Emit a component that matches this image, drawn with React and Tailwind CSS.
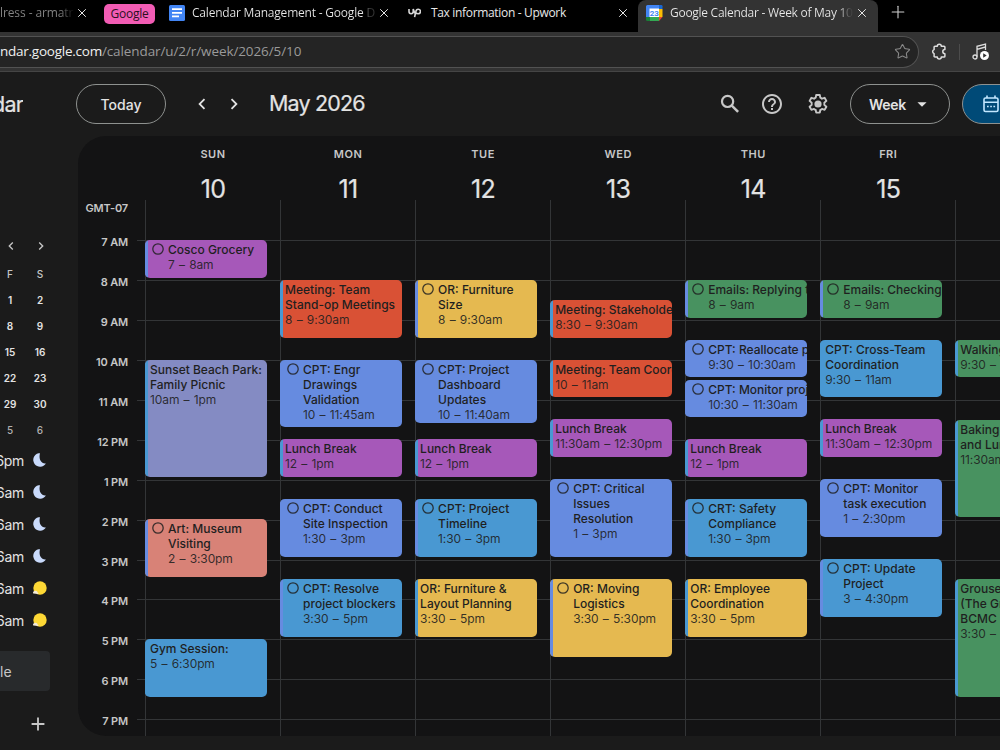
import React from "react";
import { X, Plus, Star } from "lucide-react";
import {
  MdChevronLeft,
  MdChevronRight,
  MdHelpOutline,
  MdArrowDropDown,
  MdAdd,
} from "react-icons/md";

const HOUR = 39.95;
const START = 6;

const bgColors = {
  grape: "bg-[#a658b9]",
  tomato: "bg-[#d95135]",
  lavender: "bg-[#848bc3]",
  flamingo: "bg-[#d88277]",
  peacock: "bg-[#4998d2]",
  cobalt: "bg-[#668be0]",
  banana: "bg-[#e5b950]",
  basil: "bg-[#489260]",
};

// start / end are decimal hours, task = has the round checkbox
const days = [
  {
    name: "SUN",
    date: 10,
    events: [
      { start: 7, end: 8, color: "grape", task: true, title: ["Cosco Grocery"], time: "7 – 8am" },
      { start: 10, end: 13, color: "lavender", title: ["Sunset Beach Park:", "Family Picnic"], time: "10am – 1pm" },
      { start: 14, end: 15.5, color: "flamingo", task: true, title: ["Art: Museum", "Visiting"], time: "2 – 3:30pm" },
      { start: 17, end: 18.5, color: "peacock", title: ["Gym Session:"], time: "5 – 6:30pm" },
    ],
  },
  {
    name: "MON",
    date: 11,
    events: [
      { start: 8, end: 9.5, color: "tomato", title: ["Meeting: Team", "Stand-op Meetings"], time: "8 – 9:30am" },
      { start: 10, end: 11.75, color: "cobalt", task: true, title: ["CPT: Engr", "Drawings", "Validation"], time: "10 – 11:45am" },
      { start: 12, end: 13, color: "grape", title: ["Lunch Break"], time: "12 – 1pm" },
      { start: 13.5, end: 15, color: "cobalt", task: true, title: ["CPT: Conduct", "Site Inspection"], time: "1:30 – 3pm" },
      { start: 15.5, end: 17, color: "peacock", task: true, title: ["CPT: Resolve", "project blockers"], time: "3:30 – 5pm" },
    ],
  },
  {
    name: "TUE",
    date: 12,
    events: [
      { start: 8, end: 9.5, color: "banana", task: true, title: ["OR: Furniture", "Size"], time: "8 – 9:30am" },
      { start: 10, end: 11.65, color: "cobalt", task: true, title: ["CPT: Project", "Dashboard", "Updates"], time: "10 – 11:40am" },
      { start: 12, end: 13, color: "grape", title: ["Lunch Break"], time: "12 – 1pm" },
      { start: 13.5, end: 15, color: "peacock", task: true, title: ["CPT: Project", "Timeline"], time: "1:30 – 3pm" },
      { start: 15.5, end: 17, color: "banana", title: ["OR: Furniture &", "Layout Planning"], time: "3:30 – 5pm" },
    ],
  },
  {
    name: "WED",
    date: 13,
    events: [
      { start: 8.5, end: 9.5, color: "tomato", title: ["Meeting: Stakeholders"], time: "8:30 – 9:30am" },
      { start: 10, end: 11, color: "tomato", title: ["Meeting: Team Coord"], time: "10 – 11am" },
      { start: 11.5, end: 12.5, color: "grape", title: ["Lunch Break"], time: "11:30am – 12:30pm" },
      { start: 13, end: 15, color: "cobalt", task: true, title: ["CPT: Critical", "Issues", "Resolution"], time: "1 – 3pm" },
      { start: 15.5, end: 17.5, color: "banana", task: true, title: ["OR: Moving", "Logistics"], time: "3:30 – 5:30pm" },
    ],
  },
  {
    name: "THU",
    date: 14,
    events: [
      { start: 8, end: 9, color: "basil", task: true, title: ["Emails: Replying t"], time: "8 – 9am" },
      { start: 9.5, end: 10.5, color: "cobalt", task: true, title: ["CPT: Reallocate p"], time: "9:30 – 10:30am" },
      { start: 10.5, end: 11.5, color: "cobalt", task: true, title: ["CPT: Monitor proj"], time: "10:30 – 11:30am" },
      { start: 12, end: 13, color: "grape", title: ["Lunch Break"], time: "12 – 1pm" },
      { start: 13.5, end: 15, color: "peacock", task: true, title: ["CRT: Safety", "Compliance"], time: "1:30 – 3pm" },
      { start: 15.5, end: 17, color: "banana", title: ["OR: Employee", "Coordination"], time: "3:30 – 5pm" },
    ],
  },
  {
    name: "FRI",
    date: 15,
    events: [
      { start: 8, end: 9, color: "basil", task: true, title: ["Emails: Checking"], time: "8 – 9am" },
      { start: 9.5, end: 11, color: "peacock", title: ["CPT: Cross-Team", "Coordination"], time: "9:30 – 11am" },
      { start: 11.5, end: 12.5, color: "grape", title: ["Lunch Break"], time: "11:30am – 12:30pm" },
      { start: 13, end: 14.5, color: "cobalt", task: true, title: ["CPT: Monitor", "task execution"], time: "1 – 2:30pm" },
      { start: 15, end: 16.5, color: "peacock", task: true, title: ["CPT: Update", "Project"], time: "3 – 4:30pm" },
    ],
  },
  {
    name: "",
    date: "",
    events: [
      { start: 9.5, end: 10.5, color: "basil", title: ["Walking"], time: "9:30 – 10:30am" },
      { start: 11.5, end: 14, color: "basil", title: ["Baking", "and Lunch"], time: "11:30am – 2pm" },
      { start: 15.5, end: 18.5, color: "basil", title: ["Grouse", "(The Grind)", "BCMC"], time: "3:30 – 6:30pm" },
    ],
  },
];

const hours = ["7 AM", "8 AM", "9 AM", "10 AM", "11 AM", "12 PM", "1 PM", "2 PM", "3 PM", "4 PM", "5 PM", "6 PM", "7 PM"];

const miniDates = [[1, 2], [8, 9], [15, 16], [22, 23], [29, 30], [5, 6]];

const clocks = [
  { label: "6pm", night: true },
  { label: "6am", night: true },
  { label: "6am", night: true },
  { label: "6am", night: true },
  { label: "6am", night: false },
  { label: "6am", night: false },
];

const DocsIcon = () => (
  <svg width="16" height="16" viewBox="0 0 16 16">
    <rect width="16" height="16" rx="1.5" fill="#4285f4" />
    <path d="M3 4.2h10M3 7.8h10M3 11.4h7" stroke="#fff" strokeWidth="1.7" />
  </svg>
);

const UpworkIcon = () => (
  <svg width="13" height="10" viewBox="0 0 13 10" fill="none" stroke="#d6d6d6" strokeWidth="1.6">
    <path d="M1 1v2.6a2.1 2.1 0 0 0 4.2 0V1c.5 2.2 1.6 4.2 3 4.9" />
    <path d="M6.6 9.2 7.7 4c.3-1.7 1.2-2.7 2.5-2.7a2.2 2.2 0 0 1 0 4.5c-1 0-1.9-.4-2.6-1.2" />
  </svg>
);

const CalendarIcon = () => (
  <svg width="17" height="16" viewBox="0 0 17 16">
    <path d="M1.5 0H13v4H4v8H0V1.5A1.5 1.5 0 0 1 1.5 0Z" fill="#4285f4" />
    <path d="M13 0h2.2A1.3 1.3 0 0 1 16.5 1.3V4H13Z" fill="#1967d2" />
    <path d="M13 4h3.5v8H13Z" fill="#fbbc04" />
    <path d="M4 12h9v4H4Z" fill="#34a853" />
    <path d="M0 12h4v4H1.5A1.5 1.5 0 0 1 0 14.5Z" fill="#188038" />
    <path d="M13 12h3.5L13 16Z" fill="#ea4335" />
    <path d="M3.5 3.5H13V12H3.5Z" fill="#fff" />
    <text x="8.3" y="10.8" textAnchor="middle" fontSize="8" fontWeight="700" fill="#4285f4" fontFamily="Roboto, sans-serif">23</text>
  </svg>
);

const PuzzleIcon = () => (
  <svg width="16" height="17" viewBox="0 0 16 17" fill="none" stroke="#dedede" strokeWidth="1.5" strokeLinejoin="round">
    <path d="M4 3.2h2.3a2 2 0 0 1 4 0H13a.9.9 0 0 1 .9.9v2.4a2.1 2.1 0 0 0 0 4.2v2.5a.9.9 0 0 1-.9.9h-2.7a2 2 0 0 1-4 0H4a.9.9 0 0 1-.9-.9v-2.6a2.1 2.1 0 0 1 0-4V4.1A.9.9 0 0 1 4 3.2Z" />
  </svg>
);

const MusicIcon = () => (
  <svg width="18" height="18" viewBox="0 0 18 18" fill="none" stroke="#dedede" strokeWidth="1.3">
    <path d="M5 13.8V3.3L13.5 1v6M5 6.3 13.5 4" />
    <circle cx="3" cy="14" r="2" />
    <circle cx="12.5" cy="12.5" r="4.5" fill="#fff" stroke="none" />
    <path d="M11.2 10.3v4.4l3.5-2.2Z" fill="#333" stroke="none" />
  </svg>
);

const SearchIcon = () => (
  <svg width="24" height="24" viewBox="0 0 24 24" className="-ml-px shrink-0 text-[#c7c7c7]" fill="none" stroke="currentColor">
    <circle cx="9.6" cy="9.4" r="5.6" strokeWidth="2.2" />
    <path d="m13.8 13.6 6.3 6.3" strokeWidth="2.5" />
  </svg>
);

const GearIcon = () => (
  <svg width="24" height="24" viewBox="0 0 24 24" className="ml-[22px] shrink-0 text-[#c7c7c7]" fill="none" stroke="currentColor" strokeWidth="1.9" strokeLinejoin="round">
    <path d="M10.2 3h3.6l.5 2.7a6.8 6.8 0 0 1 1.7 1l2.600-.9 1.800 3.100-2.100 1.800a6.800 6.800 0 0 1 0 2.200l2.100 1.800-1.800 3.100-2.600-.9a6.800 6.800 0 0 1-1.700 1l-.5 2.700h-3.600l-.5-2.700a6.800 6.800 0 0 1-1.700-1l-2.600.9-1.800-3.100 2.100-1.800a6.800 6.800 0 0 1 0-2.200L3.600 8.900l1.800-3.100 2.600.9a6.800 6.800 0 0 1 1.700-1Z" />
    <circle cx="12" cy="12" r="3.6" fill="currentColor" stroke="none" />
  </svg>
);

const ScheduleIcon = () => (
  <svg width="18" height="20" viewBox="0 0 18 20" fill="none" stroke="currentColor" strokeWidth="1.6">
    <rect x="2" y="4" width="14" height="13.5" rx="1.5" />
    <path d="M2 8.2h14M5 1.5V4M13 1.5V4" />
    <path d="M5 12.5h1.7M8.2 12.5h1.7M11.4 12.5h1.7" />
  </svg>
);

const Moon = () => (
  <svg width="14" height="14" viewBox="0 0 14 14">
    <path d="M5.5.3A6.8 6.8 0 1 0 12.900 10.400C9 11.200 5.200 7 7 .3Z" fill="#c9dafb" />
  </svg>
);

const Sun = () => (
  <svg width="14" height="14" viewBox="0 0 14 14">
    <circle cx="7" cy="7" r="6.7" fill="#fdd835" />
    <path d="M.4 12.6a1.600 1.600 0 0 1 1.200-2.600 2 2 0 0 1 3 1.400 1.200 1.200 0 0 1 .6 1.700Z" fill="#f3ead8" />
  </svg>
);

const TabBar = () => (
  <div className="flex h-8 bg-black font-['Open_Sans',sans-serif] text-[12px] text-[#e8e8e8]">
    <div className="flex w-[98px] shrink-0 items-center pb-[7px]">
      <span className="w-[74px] overflow-hidden whitespace-nowrap bg-gradient-to-r from-[#858585] from-82% to-[#111] to-98% bg-clip-text text-[12px] tracking-[-0.1px] text-transparent">
        lress - armatr
      </span>
      <X size={14} className="ml-px" strokeWidth={1.7} />
    </div>
    <div className="flex w-[71px] shrink-0 pl-[6px] pt-1">
      <span className="flex h-5 w-[51px] items-center justify-center rounded-[5px] bg-[#f25cb4] tracking-[-0.2px] text-[#2b1022]">
        Google
      </span>
    </div>
    <div className="flex w-[239px] shrink-0 items-center pb-[7px]">
      <DocsIcon />
      <span className="ml-[7px] w-[185px] overflow-hidden whitespace-nowrap bg-gradient-to-r from-[#e8e8e8] from-92% to-[#333] to-96% bg-clip-text font-medium tracking-[-0.2px] text-transparent">
        Calendar Management - Google D
      </span>
      <X size={14} strokeWidth={1.7} />
    </div>
    <div className="flex w-[230px] shrink-0 items-center pb-[7px]">
      <UpworkIcon />
      <span className="ml-[10px] w-[185px] whitespace-nowrap font-medium tracking-[-0.33px]">Tax information - Upwork</span>
      <X size={14} strokeWidth={1.7} />
    </div>
    <div className="flex w-[240px] shrink-0 items-center rounded-t-lg bg-[#333] pb-[7px] pl-2">
      <CalendarIcon />
      <span className="ml-[7px] w-[184px] overflow-hidden whitespace-nowrap bg-gradient-to-r from-[#e8e8e8] from-92% to-[#444] to-98% bg-clip-text font-medium tracking-[-0.28px] text-transparent">
        Google Calendar - Week of May 10
      </span>
      <X size={14} className="ml-px" strokeWidth={1.7} />
    </div>
    <Plus size={20} className="ml-[10px] mt-[2px] shrink-0 text-[#d0d0d0]" strokeWidth={1.3} />
  </div>
);

const AddressBar = () => (
  <div className="flex h-10 items-center border-b border-[#454545] bg-[#333]">
    <div className="flex h-8 w-[919px] shrink-0 items-center rounded-r-full border border-l-0 border-[#525252] bg-[#242424] font-['Open_Sans',sans-serif] text-[13.5px]">
      <span className="tracking-[-0.25px] text-[#f0f0f0]">ndar.google.com</span>
      <span className="tracking-[-0.1px] text-[#9a9a9a]">/calendar/u/2/r/week/2026/5/10</span>
      <Star size={17} className="ml-auto mr-[7px] text-[#8a8a8a]" strokeWidth={1.5} />
    </div>
    <div className="flex shrink-0 items-center">
      <div className="ml-3"><PuzzleIcon /></div>
      <div className="ml-3 h-4 w-px bg-[#4c4c4c]" />
      <div className="ml-3"><MusicIcon /></div>
    </div>
  </div>
);

const Header = () => (
  <header className="flex h-16 items-center text-[#e3e3e3]">
    <div className="flex w-[23px] shrink-0 justify-end overflow-hidden whitespace-nowrap text-[21.5px] tracking-[-0.8px] [-webkit-text-stroke:0.2px_#e3e3e3]">
      dar
    </div>
    <button className="ml-[53px] h-10 w-[90px] shrink-0 rounded-full border border-[#8e918f] text-[14px] font-medium">
      Today
    </button>
    <MdChevronLeft size={22} className="ml-[25px] shrink-0" />
    <MdChevronRight size={22} className="ml-[10px] shrink-0" />
    <h1 className="ml-[24px] w-[450px] shrink-0 pb-[2px] text-[21.5px] tracking-[-0.85px] [-webkit-text-stroke:0.2px_#e3e3e3]">May 2026</h1>
    <SearchIcon />
    <MdHelpOutline size={24} className="ml-[18px] shrink-0 text-[#c7c7c7]" />
    <GearIcon />
    <button className="ml-5 flex h-10 w-[100px] shrink-0 items-center rounded-full border border-[#8e918f] pl-[18px] text-[14px] font-semibold tracking-[-0.3px]">
      Week
      <MdArrowDropDown size={22} className="ml-[5px]" />
    </button>
    <button className="ml-3 flex h-10 w-[100px] shrink-0 items-center rounded-full border border-[#8e918f] bg-[#004a77] pl-[19px] text-[#c2e7ff]">
      <ScheduleIcon />
    </button>
  </header>
);

const Sidebar = () => (
  <aside className="w-[78px] shrink-0 overflow-hidden text-[#e3e3e3]">
    <div className="mt-[102px] flex h-4 items-center pl-[3px] text-[#c7c7c7]">
      <MdChevronLeft size={16} />
      <MdChevronRight size={16} className="ml-[14px]" />
    </div>
    <div className="mt-[7px] text-[10px] font-medium">
      <div className="flex h-[26px] items-center pt-px text-[#c7c7c7]">
        <span className="w-5 text-center">F</span>
        <span className="ml-[10px] w-5 text-center">S</span>
      </div>
      {miniDates.map(([f, s]) => (
        <div key={f + "-" + s} className="flex h-[26px] items-center">
          <span className={f === 5 ? "w-5 text-center text-[#b0b0b0]" : "w-5 text-center font-semibold"}>{f}</span>
          <span className={f === 5 ? "ml-[10px] w-5 text-center text-[#b0b0b0]" : "ml-[10px] w-5 text-center font-semibold"}>{s}</span>
        </div>
      ))}
    </div>
    <div className="mt-px">
      {clocks.map((c, i) => (
        <div key={i} className="flex h-8 items-center">
          <span className="flex w-6 justify-end whitespace-nowrap text-[14px] tracking-[-0.3px]">{c.label}</span>
          <span className="ml-[9px]">{c.night ? <Moon /> : <Sun />}</span>
        </div>
      ))}
    </div>
    <div className="mt-[15px] flex h-10 w-[50px] items-center rounded-r bg-[#282a2c] text-[14px] text-[#c7c7c7]">le</div>
    <MdAdd size={22} className="ml-[27px] mt-[22px] text-[#c7c7c7]" />
  </aside>
);

const TaskCircle = () => (
  <svg width="12" height="12" viewBox="0 0 12 12" className="ml-[3.5px] mt-[3px] shrink-0" fill="none">
    <circle cx="6" cy="6" r="5.2" stroke="#1f1f1f" strokeOpacity="0.85" strokeWidth="1.3" />
  </svg>
);

const EventCard = ({ event, prevEnd }) => {
  const { start, end, color, task, title, time } = event;
  return (
    <div
      className={`flex w-[121.5px] overflow-hidden rounded-[5px] ${bgColors[color]}`}
      style={{
        marginTop: (start - prevEnd) * HOUR + (prevEnd === START ? -0.2 : 2.1),
        height: (end - start) * HOUR - 2.1,
      }}
    >
      <div className={`w-[3px] shrink-0 ${task ? "bg-[#668be0]" : "bg-[#4998d2]"}`} />
      {task && <TaskCircle />}
      <div className={`${task ? "pl-[4.5px]" : "pl-[2px]"} whitespace-nowrap pt-[2px] text-[12px] leading-[15px] text-[#1f1f1f]`}>
        {title.map((line) => (
          <div key={line} className="font-medium">{line}</div>
        ))}
        <div className="tracking-[-0.1px] text-[#1f1f1f]/90 [word-spacing:1px]">{time}</div>
      </div>
    </div>
  );
};

const WeekGrid = () => (
  <main className="h-[600px] min-w-0 flex-1 overflow-hidden rounded-l-[28px] bg-[#131314]">
    <div className="flex h-16 pl-[67.5px]">
      {days.map((d, i) => (
        <div key={i} className="w-[135.05px] shrink-0 pt-[10px] text-center">
          <div className="text-[11px] font-semibold leading-4 tracking-[0.5px] text-[#c7c7c7]">{d.name}</div>
          <div className="mt-[11px] text-[25px] leading-8 tracking-[-0.6px] text-[#e3e3e3] [-webkit-text-stroke:0.2px_#e3e3e3]">{d.date}</div>
        </div>
      ))}
    </div>

    <div className="flex h-[536px]">
      <div className="w-[50px] shrink-0 text-right text-[11px] font-semibold tracking-[-0.15px] text-[#c7c7c7]">
        <div className="h-[21px] whitespace-nowrap leading-4">GMT-07</div>
        {hours.map((h) => (
          <div key={h} className="h-[39.95px] pt-[13px] leading-4">{h}</div>
        ))}
      </div>

      <div className="ml-[9px] grid flex-1 grid-cols-[minmax(0,1fr)] overflow-hidden">
        {/* hour lines */}
        <div className="col-start-1 row-start-1 pt-10">
          {hours.map((h) => (
            <div key={h} className="h-[39.95px] border-t border-[#333537]" />
          ))}
        </div>
        {/* day columns */}
        <div className="col-start-1 row-start-1 flex pl-2">
          {days.map((d, i) => (
            <div key={i} className="w-[135.05px] shrink-0 border-l border-[#333537]">
              <div className="-ml-px">
                {d.events.map((e, j) => (
                  <EventCard key={j} event={e} prevEnd={j === 0 ? START : d.events[j - 1].end} />
                ))}
              </div>
            </div>
          ))}
        </div>
      </div>
    </div>
  </main>
);

export default function App() {
  return (
    <div className="h-[750px] w-[1000px] overflow-hidden bg-[#1b1b1b] font-['Inter',sans-serif]">
      <TabBar />
      <AddressBar />
      <Header />
      <div className="flex h-[614px]">
        <Sidebar />
        <WeekGrid />
      </div>
    </div>
  );
}
